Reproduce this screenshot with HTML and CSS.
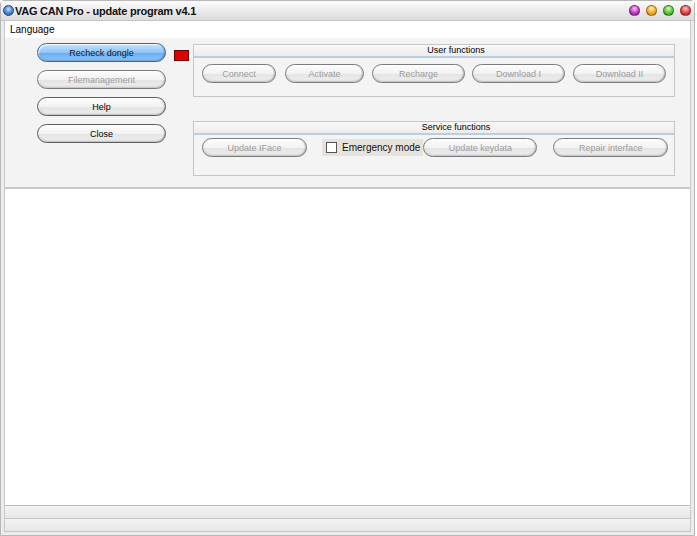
FILE: index.html
```html
<!DOCTYPE html>
<html lang="en">
<head>
    <meta charset="UTF-8">
    <title>VAG CAN Pro - update program v4.1</title>
    <link rel="stylesheet" href="styles.css">
</head>
<body>
    <div class="window">
        <div class="titlebar">
            <span class="app-dot"></span>
            <span class="title">VAG CAN Pro - update program v4.1</span>
            <div class="controls">
                <span class="ctl purple"></span>
                <span class="ctl orange"></span>
                <span class="ctl green"></span>
                <span class="ctl red"></span>
            </div>
        </div>
        <div class="frame">
            <div class="menubar">Language</div>
            <div class="toolpanel">
                <div class="side">
                    <button class="pill active">Recheck dongle</button>
                    <button class="pill disabled">Filemanagement</button>
                    <button class="pill">Help</button>
                    <button class="pill">Close</button>
                </div>
                <div class="led"></div>
                <div class="groups">
                    <div class="group">
                        <div class="group-head">User functions</div>
                        <div class="group-row user-row">
                            <button class="pill disabled w-connect">Connect</button>
                            <button class="pill disabled w-activate">Activate</button>
                            <button class="pill disabled w-recharge">Recharge</button>
                            <button class="pill disabled w-dl">Download I</button>
                            <button class="pill disabled w-dl">Download II</button>
                        </div>
                    </div>
                    <div class="group service">
                        <div class="group-head">Service functions</div>
                        <div class="group-row service-row">
                            <button class="pill disabled w-iface">Update IFace</button>
                            <label class="emergency"><span class="box"></span>Emergency mode</label>
                            <button class="pill disabled w-key">Update keydata</button>
                            <button class="pill disabled w-repair">Repair interface</button>
                        </div>
                    </div>
                </div>
            </div>
            <div class="log"></div>
            <div class="status"></div>
            <div class="status"></div>
        </div>
    </div>
</body>
</html>
```

FILE: styles.css
```css
body {
    margin: 0;
    background-color: #fff;
    font-family: "Liberation Sans", Arial, sans-serif;
    color: #000;
}
.window {
    width: 695px;
    height: 536px;
    border: 1px solid #b8b8b8;
    border-radius: 4px 4px 0 0;
    box-sizing: border-box;
    display: flex;
    flex-direction: column;
    background-color: #ececec;
}
.titlebar {
    height: 19px;
    display: flex;
    align-items: center;
    padding: 0 3px 0 2px;
    background: linear-gradient(#fbfbfb, #e8e8e8 60%, #dcdcdc);
    border-bottom: 1px solid #c4c4c4;
}
.app-dot {
    width: 9px;
    height: 9px;
    border-radius: 50%;
    background: radial-gradient(circle at 50% 35%, #cfe3ff 0, #5b8fd8 45%, #1f4f9a 100%);
    border: 1px solid #1d4686;
    margin-right: 1px;
}
.title {
    font-weight: bold;
    font-size: 11px;
    letter-spacing: -0.25px;
    color: #111;
}
.controls {
    margin-left: auto;
    display: flex;
    gap: 6px;
}
.ctl {
    width: 9px;
    height: 9px;
    border-radius: 50%;
    border: 1px solid rgba(0, 0, 0, 0.35);
}
.ctl.purple { background: radial-gradient(circle at 50% 30%, #f6c8f4, #c02fc0 60%, #8a1a8a); }
.ctl.orange { background: radial-gradient(circle at 50% 30%, #fff0b8, #f0a818 60%, #c07a00); }
.ctl.green { background: radial-gradient(circle at 50% 30%, #d8f8b8, #50c030 60%, #2a8a10); }
.ctl.red { background: radial-gradient(circle at 50% 30%, #ffc8c8, #e03838 60%, #a01818); }
.frame {
    flex: 1;
    display: flex;
    flex-direction: column;
    margin: 0 3px 3px 3px;
    border-left: 1px solid #c8c8c8;
    border-right: 1px solid #c8c8c8;
    background-color: #f3f3f3;
}
.menubar {
    height: 17px;
    line-height: 17px;
    font-size: 10px;
    padding-left: 5px;
    background-color: #fff;
}
.toolpanel {
    height: 151px;
    flex-shrink: 0;
    display: flex;
    align-items: flex-start;
    background-color: #f3f3f3;
    border-bottom: 2px solid #c9c9c9;
    box-sizing: border-box;
}
.side {
    display: flex;
    flex-direction: column;
    gap: 8px;
    margin: 5px 0 0 32px;
    width: 129px;
}
.pill {
    height: 19px;
    border: 1px solid #5e5e5e;
    border-radius: 10px;
    background: linear-gradient(#fdfdfd, #f2f2f2 50%, #e4e4e4 51%, #eeeeee);
    box-shadow: inset 0 -1px 2px rgba(0, 0, 0, 0.2), inset 1px 1px 1px #fff, inset -1px 0 1px rgba(0, 0, 0, 0.15);
    font-family: "Liberation Sans", Arial, sans-serif;
    font-size: 9px;
    color: #000;
    padding: 0;
    box-sizing: border-box;
    white-space: nowrap;
}
.pill.active {
    border-color: #34679f;
    background: linear-gradient(#c4e2ff, #90c4f8 50%, #68aaf0 51%, #8ec8ff);
    color: #0a1a30;
}
.pill.disabled {
    color: #9c9c9c;
    border-color: #7c7c7c;
}
.led {
    width: 15px;
    height: 11px;
    background-color: #e00000;
    border: 1px solid #6a0000;
    box-sizing: border-box;
    margin: 12px 0 0 8px;
}
.groups {
    display: flex;
    flex-direction: column;
    gap: 24px;
    margin: 6px 0 0 4px;
    width: 482px;
}
.group {
    border: 1px solid #c6c6c6;
    background-color: #f4f4f4;
    height: 53px;
    box-sizing: border-box;
}
.group.service {
    height: 55px;
}
.group-head {
    height: 11px;
    line-height: 11px;
    font-size: 9px;
    text-align: center;
    padding-left: 44px;
    background: linear-gradient(#f8f8f8, #ececec);
    border-bottom: 2px solid #b7cfe0;
}
.group-row {
    display: flex;
    align-items: center;
}
.user-row {
    margin: 6px 0 0 8px;
}
.service-row {
    margin: 3px 0 0 8px;
}
.w-connect { width: 74px; margin-right: 9px; }
.w-activate { width: 79px; margin-right: 8px; }
.w-recharge { width: 93px; margin-right: 7px; }
.w-dl { width: 93px; margin-right: 8px; }
.w-iface { width: 105px; }
.w-key { width: 114px; margin-right: 16px; }
.w-repair { width: 115px; }
.emergency {
    display: flex;
    align-items: center;
    height: 17px;
    margin-left: 15px;
    padding: 0 3px 0 4px;
    background-color: #e7e3dc;
    font-size: 10px;
    color: #111;
    white-space: nowrap;
}
.box {
    width: 9px;
    height: 9px;
    border: 1px solid #555;
    background-color: #fff;
    margin-right: 5px;
    flex-shrink: 0;
}
.log {
    flex: 1;
    background-color: #fff;
    border-bottom: 1px solid #bdbdbd;
}
.status {
    height: 12px;
    flex-shrink: 0;
    background: linear-gradient(#f4f4f4, #e6e6e6);
    border-bottom: 1px solid #c4c4c4;
}
```
